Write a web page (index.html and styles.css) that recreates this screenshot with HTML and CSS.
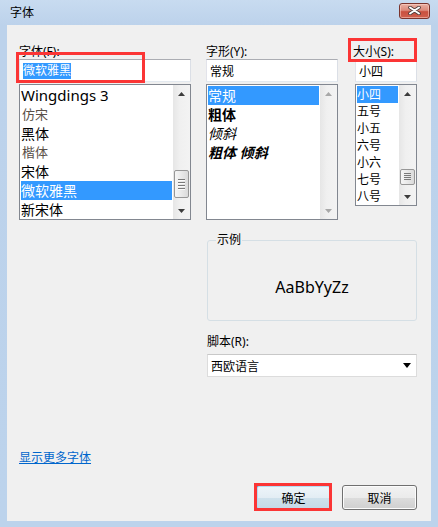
FILE: index.html
```html
<!DOCTYPE html>
<html lang="zh-CN">
<head>
<meta charset="utf-8">
<title>字体</title>
<link rel="stylesheet" href="styles.css">
</head>
<body>
<div class="window">
  <div class="titlebar">
    <span class="title">字体</span>
    <div class="close">
      <svg width="13" height="9" viewBox="0 0 13 9">
        <path d="M2 1.5 L11 7.5 M11 1.5 L2 7.5" stroke="#4a3a38" stroke-width="3.6" stroke-linecap="round"/>
        <path d="M2 1.5 L11 7.5 M11 1.5 L2 7.5" stroke="#ffffff" stroke-width="2" stroke-linecap="round"/>
      </svg>
    </div>
  </div>
  <div class="client">
    <div class="columns">
      <div class="col col-font">
        <div class="lbl">字体(F):</div>
        <div class="input"><span class="sel">微软雅黑</span></div>
        <div class="list list-font">
          <ul class="items">
            <li class="wing">Wingdings 3</li>
            <li class="thin">仿宋</li>
            <li>黑体</li>
            <li class="thin">楷体</li>
            <li class="song">宋体</li>
            <li class="on">微软雅黑</li>
            <li class="song">新宋体</li>
          </ul>
          <div class="sb">
            <div class="sb-btn"><svg width="7" height="4" viewBox="0 0 7 4"><path d="M3.5 0 L7 4 L0 4 Z" fill="#3c3c3c"/></svg></div>
            <div class="sb-track"><div class="thumb thumb-font"><i></i><i></i><i></i><i></i></div></div>
            <div class="sb-btn"><svg width="7" height="4" viewBox="0 0 7 4"><path d="M0 0 L7 0 L3.5 4 Z" fill="#3c3c3c"/></svg></div>
          </div>
        </div>
      </div>
      <div class="col col-style">
        <div class="lbl">字形(Y):</div>
        <div class="input"><span>常规</span></div>
        <div class="list list-style">
          <ul class="items">
            <li class="on">常规</li>
            <li class="b">粗体</li>
            <li class="it">倾斜</li>
            <li class="b it">粗体 倾斜</li>
          </ul>
          <div class="sb">
            <div class="sb-btn"><svg width="7" height="4" viewBox="0 0 7 4"><path d="M3.5 0 L7 4 L0 4 Z" fill="#a8a8a8"/></svg></div>
            <div class="sb-track"></div>
            <div class="sb-btn"><svg width="7" height="4" viewBox="0 0 7 4"><path d="M0 0 L7 0 L3.5 4 Z" fill="#a8a8a8"/></svg></div>
          </div>
        </div>
      </div>
      <div class="col col-size">
        <div class="lbl">大小(S):</div>
        <div class="input"><span>小四</span></div>
        <div class="list list-size">
          <ul class="items">
            <li class="on">小四</li>
            <li>五号</li>
            <li>小五</li>
            <li>六号</li>
            <li>小六</li>
            <li>七号</li>
            <li>八号</li>
          </ul>
          <div class="sb">
            <div class="sb-btn"><svg width="7" height="4" viewBox="0 0 7 4"><path d="M3.5 0 L7 4 L0 4 Z" fill="#3c3c3c"/></svg></div>
            <div class="sb-track"><div class="thumb thumb-size"><i></i><i></i><i></i><i></i></div></div>
            <div class="sb-btn"><svg width="7" height="4" viewBox="0 0 7 4"><path d="M0 0 L7 0 L3.5 4 Z" fill="#3c3c3c"/></svg></div>
          </div>
        </div>
      </div>
    </div>

    <fieldset class="sample">
      <legend>示例</legend>
      <div class="sample-text">AaBbYyZz</div>
    </fieldset>

    <div class="lbl script-lbl">脚本(R):</div>
    <div class="select">
      <span>西欧语言</span>
      <svg width="8" height="5" viewBox="0 0 8 5"><path d="M0 0 L8 0 L4 5 Z" fill="#000"/></svg>
    </div>

    <a class="more" href="#">显示更多字体</a>

    <div class="buttons">
      <div class="btn btn-default">确定</div>
      <div class="btn">取消</div>
    </div>
  </div>

  <div class="mark mark-font"></div>
  <div class="mark mark-size"></div>
  <div class="mark mark-ok"></div>
</div>
</body>
</html>
```

FILE: styles.css
```css
html, body {
  margin: 0;
  padding: 0;
}
body {
  width: 438px;
  height: 527px;
  overflow: hidden;
  font-family: "Noto Sans", "Noto Sans CJK SC", sans-serif;
  color: #000;
}
.window {
  position: relative;
  width: 438px;
  height: 527px;
  box-sizing: border-box;
  padding: 0 7px 6px;
  background: linear-gradient(#c8dbf0, #bcd2eb 25px, #bcd3ec);
  display: flex;
  flex-direction: column;
}
.titlebar {
  height: 25px;
  flex: none;
  margin: 0 -7px;
  padding: 0 8px 0 10px;
  display: flex;
  align-items: center;
  justify-content: space-between;
}
.title {
  font-size: 12px;
  line-height: 14px;
  margin-top: 1px;
}
.close {
  width: 31px;
  height: 16px;
  margin-top: -4px;
  box-sizing: border-box;
  border: 1px solid #7b342d;
  border-radius: 3px;
  background: linear-gradient(#eab0a3 0%, #dc8a7b 45%, #c9503f 55%, #d0604e 100%);
  box-shadow: inset 0 0 0 1px rgba(255, 220, 210, 0.5);
  display: flex;
  align-items: center;
  justify-content: center;
}
.client {
  flex: 1;
  background: #f0f0f0;
  box-sizing: border-box;
  padding: 20px 14px 0 12px;
  display: flex;
  flex-direction: column;
}
.columns {
  display: flex;
}
.col {
  display: flex;
  flex-direction: column;
}
.col-font { width: 172px; }
.col-style { width: 132px; margin-left: 15px; }
.col-size { width: 62px; margin-left: 17px; }
.lbl {
  font-size: 12px;
  line-height: 14px;
  height: 14px;
  white-space: nowrap;
}
.col-size .lbl { margin-left: -2px; }
.input {
  height: 23px;
  box-sizing: border-box;
  border: 1px solid;
  border-color: #abadb3 #dbdfe6 #e3e9ef #e2e3ea;
  background: #fff;
  font-size: 12px;
  padding-left: 3px;
  display: flex;
  align-items: center;
}
.input .sel {
  height: 16px;
  line-height: 16px;
  background: #3399ff;
  color: #fff;
}
.list {
  margin-top: 2px;
  box-sizing: border-box;
  border: 1px solid #828790;
  background: #fff;
  display: flex;
}
.list-font, .list-style { height: 136px; }
.list-size { height: 122px; }
.items {
  flex: 1;
  margin: 0;
  padding: 1px;
  list-style: none;
  overflow: hidden;
  min-width: 0;
}
.items li {
  height: 19px;
  line-height: 19px;
  font-size: 14px;
  white-space: nowrap;
}
.items li.wing {
  font-size: 15px;
}
.items li.thin {
  color: #5a5048;
  font-size: 13px;
  padding-left: 1px;
}
.items li.b { font-weight: bold; }
.items li.it { font-style: italic; }
.items li.on {
  background: #3399ff;
  color: #fff;
}
.list-size li {
  height: 17px;
  line-height: 17px;
  font-size: 12px;
}
.sb {
  width: 17px;
  flex: none;
  display: flex;
  flex-direction: column;
  background: linear-gradient(to right, #e6e6e6, #f0f0f0 40%, #f3f3f3);
}
.sb-btn {
  height: 17px;
  flex: none;
  display: flex;
  align-items: center;
  justify-content: center;
}
.sb-track {
  flex: 1;
}
.thumb {
  width: 15px;
  margin-left: 1px;
  box-sizing: border-box;
  border: 1px solid #979797;
  border-radius: 2px;
  background: linear-gradient(to right, #f6f6f6, #e9e9e9 50%, #dadada);
  display: flex;
  flex-direction: column;
  align-items: center;
  justify-content: center;
  gap: 1px;
}
.thumb i {
  display: block;
  width: 7px;
  height: 1px;
  background: #7a7a7a;
  border-bottom: 1px solid #fbfbfb;
}
.thumb-font { margin-top: 68px; height: 28px; }
.thumb-size { margin-top: 67px; height: 16px; gap: 0; }
.thumb-size i { border-bottom-width: 0; margin-bottom: 1px; }

.sample {
  margin: 13px 0 0 188px;
  width: 210px;
  box-sizing: border-box;
  border: 1px solid #d5dfe5;
  border-radius: 3px;
  padding: 0;
  min-inline-size: 0;
}
.sample legend {
  font-size: 12px;
  line-height: 14px;
  padding: 0 1px;
  margin-left: 8px;
}
.sample-text {
  height: 73px;
  box-sizing: border-box;
  padding-top: 7px;
  display: flex;
  align-items: center;
  justify-content: center;
  font-size: 16px;
  line-height: 20px;
}
.script-lbl {
  margin: 14px 0 0 188px;
}
.select {
  margin: 5px 0 0 188px;
  width: 210px;
  height: 23px;
  box-sizing: border-box;
  border: 1px solid #dcdcdc;
  border-top-color: #c8c8c8;
  background: #fff;
  font-size: 12px;
  padding: 0 5px 0 3px;
  display: flex;
  align-items: center;
  justify-content: space-between;
}
.more {
  margin-top: 74px;
  align-self: flex-start;
  font-size: 12px;
  line-height: 14px;
  color: #0066cc;
  text-decoration: underline;
}
.buttons {
  margin-top: 20px;
  display: flex;
  justify-content: flex-end;
  gap: 11px;
}
.btn {
  width: 75px;
  height: 25px;
  box-sizing: border-box;
  border: 1px solid #707070;
  border-radius: 3px;
  background: linear-gradient(#f2f2f2, #ebebeb 50%, #dddddd 50%, #cfcfcf);
  box-shadow: inset 0 0 0 1px #fcfcfc;
  font-size: 12px;
  display: flex;
  align-items: center;
  justify-content: center;
}
.btn-default {
  border-color: #3c7fb1;
  background: linear-gradient(#eef5fa, #e3edf4 50%, #cfe1ec 50%, #c4d9e7);
  box-shadow: inset 0 0 0 1px #b4dcf3;
}
.mark {
  position: absolute;
  box-sizing: border-box;
  border: 3px solid #fb3535;
}
.mark-font { left: 16px; top: 52px; width: 129px; height: 31px; }
.mark-size { left: 348px; top: 38px; width: 69px; height: 24px; }
.mark-ok { left: 254px; top: 483px; width: 78px; height: 28px; }
```
